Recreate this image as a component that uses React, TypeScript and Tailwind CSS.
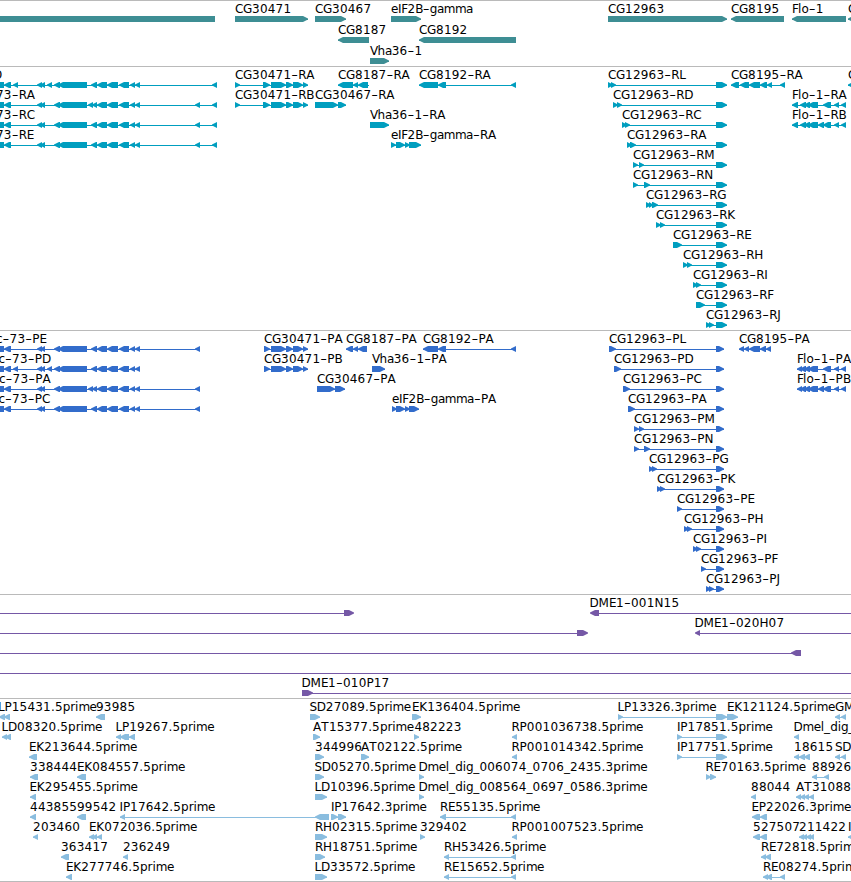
interface Feature {
    label?: string;
    // label start, when it differs from the first block
    x?: number;
    dir: "l" | "r";
    blocks: number[][];
    // connector range, when it runs past the blocks
    line?: [number, number];
}

interface TrackData {
    name: string;
    color: string;
    size: string;
    rowSize: string;
    rows: Feature[][];
}

const WIDTH = 851;
const HEAD = 5;

// Advance of each glyph in a label, px
const ADVANCE: Record<string, number> = {
    A: 8.3, B: 7.4, C: 8, D: 9, E: 7.2, F: 6.1, G: 9, H: 9, I: 3.3, J: 3.5, K: 8, L: 6.5,
    M: 10.3, N: 9, P: 7.2, R: 8, S: 7.2, T: 7.6, V: 7.6,
    a: 6.8, c: 6.6, d: 7.6, e: 7, g: 7.2, h: 7.3, i: 3.3, l: 3.3, m: 11.2, o: 7.4, p: 7.6, r: 4.8,
    "-": 7, "_": 6.1, ".": 3.9,
};

const left = (label: string, blocks: number[][], x?: number): Feature => ({ label, dir: "l", blocks, x });
const right = (label: string, blocks: number[][], x?: number): Feature => ({ label, dir: "r", blocks, x });

const geneRows: Feature[][] = [
    [
        { dir: "l", blocks: [[-20, 215]] },
        right("CG30471", [[235, 308]]),
        right("CG30467", [[315, 346]]),
        right("eIF2B-gamma", [[391, 421]]),
        right("CG12963", [[608, 727]]),
        left("CG8195", [[731, 784]]),
        left("Flo-1", [[792, 846]]),
        left("CG", [[848, 870]]),
    ],
    [left("CG8187", [[338, 369]]), left("CG8192", [[419, 516]])],
    [right("Vha36-1", [[370, 389]])],
];

const body = [[58, 87], [97, 107], [107, 118], [119, 129], [130, 135], [135, 140]];
const start73 = [[-20, 4], [4, 11], [37, 42], [40, 45], [54, 60]];
const start73D = [...start73, [13, 18], [47, 52]];
const cg30471 = [[263, 270], [271, 286], [286, 293], [293, 303], [303, 308]];
const flo = [[800, 806], [804, 810], [808, 818], [823, 831], [834, 839], [841, 846]];

const rnaEnd = [716, 727];
const rna = (suffix: string, ...blocks: number[][]) => right(`CG12963-R${suffix}`, [...blocks, rnaEnd]);

const transcriptRows: Feature[][] = [
    [
        left("RD", [...start73D, [91, 97], ...body, [212, 217]], -15),
        right("CG30471-RA", [[235, 240], ...cg30471]),
        { ...left("CG8187-RA", [[338, 353], [353, 358], [358, 368]]), line: [338, 369] },
        left("CG8192-RA", [[419, 438], [438, 446], [511, 516]]),
        rna("L", [608, 613], [611, 616]),
        left("CG8195-RA", [[731, 739], [740, 749], [749, 760], [760, 767], [767, 772], [780, 785]]),
        left("CG", [[848, 870]]),
    ],
    [
        left("73-RA", [...start73, [88, 93], [92, 97], ...body, [195, 200], [212, 217]], -4),
        right("CG30471-RB", [[235, 240], ...cg30471]),
        right("CG30467-RA", [[315, 338], [338, 346]]),
        rna("D", [613, 618], [617, 622]),
        left("Flo-1-RA", [[792, 798], ...flo]),
    ],
    [
        left("73-RC", [...start73, [91, 97], ...body, [195, 200], [212, 217]], -4),
        right("Vha36-1-RA", [[370, 389]]),
        rna("C", [622, 627], [625, 630]),
        left("Flo-1-RB", [[792, 798], ...flo, [818, 824]]),
    ],
    [
        left("73-RE", [...start73, [91, 97], ...body, [195, 200], [212, 217]], -4),
        right("eIF2B-gamma-RA", [[391, 396], [396, 405], [405, 410], [409, 421]]),
        rna("A", [627, 632], [630, 636]),
    ],
    [rna("M", [633, 638], [639, 644])],
    [rna("N", [633, 638], [644, 650])],
    [rna("G", [646, 651], [649, 653], [652, 658])],
    [rna("K", [656, 661], [660, 665])],
    [rna("E", [673, 682])],
    [rna("H", [683, 688], [687, 692])],
    [rna("I", [693, 698], [696, 701])],
    [rna("F", [696, 705])],
    [rna("J", [706, 711], [709, 714])],
];

const pep = (suffix: string, ...blocks: number[][]) => right(`CG12963-P${suffix}`, [...blocks, [716, 724]]);
const pep30471 = [[264, 270], ...cg30471.slice(1)];

const proteinRows: Feature[][] = [
    [
        left("c-73-PE", [...start73, [91, 97], ...body, [195, 200]], -4),
        right("CG30471-PA", pep30471),
        left("CG8187-PA", [[346, 353], [353, 358], [358, 367]]),
        left("CG8192-PA", [[423, 438], [438, 446], [511, 516]]),
        pep("L", [609, 616]),
        left("CG8195-PA", [[739, 744], [744, 749], [749, 760], [760, 766], [766, 771]]),
    ],
    [
        left("c-73-PD", [...start73D, [91, 97], ...body], -1.5),
        right("CG30471-PB", pep30471),
        right("Vha36-1-PA", [[372, 385]]),
        pep("D", [614, 621]),
        left("Flo-1-PA", [[797, 802], ...flo]),
    ],
    [
        left("c-73-PA", [...start73, [88, 93], [92, 97], ...body, [195, 200]], -1),
        right("CG30467-PA", [[317, 335], [335, 345]]),
        pep("C", [623, 630]),
        left("Flo-1-PB", [[797, 802], ...flo, [818, 824]]),
    ],
    [
        left("c-73-PC", [...start73, [91, 97], ...body, [195, 200]], -1.5),
        right("eIF2B-gamma-PA", [[392, 397], [396, 405], [405, 410], [409, 419]]),
        pep("A", [628, 635]),
    ],
    [pep("M", [634, 639], [639, 644])],
    [pep("N", [634, 639], [644, 650])],
    [pep("G", [649, 654], [652, 657])],
    [pep("K", [657, 662], [660, 665])],
    [pep("E", [677, 682])],
    [pep("H", [684, 689], [687, 692])],
    [pep("I", [693, 698], [696, 701])],
    [pep("F", [701, 706])],
    [pep("J", [706, 711], [709, 714])],
];

const cloneRows: Feature[][] = [
    [
        { dir: "r", blocks: [[344, 354]], line: [0, 350] },
        { ...left("DME1-001N15", [[590, 599]], 589.6), line: [595, WIDTH] },
    ],
    [
        { dir: "r", blocks: [[577, 588]], line: [0, 580] },
        { ...left("DME1-020H07", [[695, 700]], 694.6), line: [697, WIDTH] },
    ],
    [{ dir: "l", blocks: [[791, 801]], line: [0, 800] }],
    [{ dir: "r", blocks: [], line: [0, WIDTH] }],
    [{ ...right("DME1-010P17", [[302, 313]], 301.6), line: [305, WIDTH] }],
];

const estRows: Feature[][] = [
    [
        left("LP15431.5prime", [[-1, 5], [4, 10]], -2),
        left("93985", [[96, 105]]),
        right("SD27089.5prime", [[310, 320]], 309.6),
        right("EK136404.5prime", [[412, 421]]),
        right("LP13326.3prime", [[618, 623], [716, 727]], 617.6),
        right("EK121124.5prime", [[727, 738]]),
        left("GM", [[835, 840], [841, 846]]),
    ],
    [
        left("LD08320.5prime", [[2, 7], [5, 11]], 1.6),
        left("LP19267.5prime", [[116, 121], [120, 129], [129, 135]], 115.6),
        right("AT15377.5prime", [[313, 320]]),
        right("482223", [[414, 419]], 414.4),
        left("RP001036738.5prime", [[512, 517]], 511.6),
        right("IP17851.5prime", [[677, 682], [716, 727]]),
        left("Dmel_dig_", [[794, 799]], 793.6),
    ],
    [
        left("EK213644.5prime", [[29, 37]]),
        right("344996", [[315, 324]]),
        right("AT02122.5prime", [[361, 369]]),
        left("RP001014342.5prime", [[512, 517]], 511.6),
        right("IP17751.5prime", [[677, 682], [716, 727]]),
        left("18615", [[794, 799], [799, 805], [804, 810]]),
        left("SD", [[835, 840], [841, 846]]),
    ],
    [
        left("338444", [[30, 38]]),
        left("EK084557.5prime", [[77, 86]]),
        right("SD05270.5prime", [[315, 324]], 314.6),
        right("Dmel_dig_006074_0706_2435.3prime", [[419, 424]], 418.6),
        right("RE70163.5prime", [[706, 711], [710, 716]], 705.6),
        left("88926", [[812, 817], [824, 829]]),
    ],
    [
        left("EK295455.5prime", [[30, 36]], 29.6),
        right("LD10396.5prime", [[315, 327]], 314.6),
        right("Dmel_dig_008564_0697_0586.3prime", [[419, 424]], 418.6),
        left("88044", [[751, 756]]),
        left("AT31088", [[796, 801], [800, 805], [804, 809], [809, 814]]),
    ],
    [
        left("443855", [[30, 36]]),
        left("99542", [[77, 86]]),
        left("IP17642.5prime", [[120, 125], [315, 329]], 119.6),
        right("IP17642.3prime", [[331, 338], [338, 346]]),
        left("RE55135.5prime", [[440, 446], [511, 516]]),
        left("EP22026.3prime", [[752, 760], [760, 767]], 751.6),
    ],
    [
        left("203460", [[33, 38]]),
        left("EK072036.5prime", [[89, 94], [92, 97], [97, 102]]),
        right("RH02315.5prime", [[315, 327]]),
        right("329402", [[420, 425]]),
        left("RP001007523.5prime", [[512, 517]], 511.6),
        left("527507", [[753, 760], [760, 767]]),
        left("211422", [[799, 804], [802, 807], [806, 811], [809, 814]]),
        left("IP", [[848, 860]]),
    ],
    [
        left("363417", [[61, 69]]),
        left("236249", [[123, 128]]),
        right("RH18751.5prime", [[315, 325]]),
        left("RH53426.5prime", [[444, 449], [511, 516]]),
        left("RE72818.5prime", [[761, 766], [765, 771]]),
    ],
    [
        left("EK277746.5prime", [[66, 72]]),
        right("LD33572.5prime", [[315, 327]], 314.6),
        left("RE15652.5prime", [[444, 449], [511, 516]]),
        left("RE08274.5prime", [[763, 768], [766, 772], [780, 785]]),
    ],
];

const tracks: TrackData[] = [
    { name: "Genes", color: "#3e8e94", size: "h-[66px]", rowSize: "h-[21px]", rows: geneRows },
    { name: "Transcripts", color: "#009ebf", size: "h-[264px]", rowSize: "h-5", rows: transcriptRows },
    { name: "Proteins", color: "#326ccb", size: "h-[264px]", rowSize: "h-5", rows: proteinRows },
    { name: "Clones", color: "#7558a6", size: "h-[104px]", rowSize: "h-5", rows: cloneRows },
    { name: "ESTs", color: "#8abddf", size: "h-[183px]", rowSize: "h-5", rows: estRows },
];

// Splits a label at its hyphens, which are stretched wider than the font has them
function labelRuns(label: string, x: number) {
    let pos = x;
    return label.split(/(-)/).filter(Boolean).map(text => {
        const xs = text.split("").map(ch => {
            const at = pos;
            pos += ADVANCE[ch] ?? 7.85;
            return at.toFixed(1);
        });
        return { text, hyphen: text === "-", xs: xs.join(" ") };
    });
}

function blockPoints([a, b]: number[], dir: "l" | "r") {
    const head = Math.min(HEAD, b - a);
    return dir === "r"
        ? `${a},13 ${b - head},13 ${b},15.5 ${b},16.5 ${b - head},19 ${a},19`
        : `${b},13 ${a + head},13 ${a},15.5 ${a},16.5 ${a + head},19 ${b},19`;
}

function FeatureGlyph({ feature, color }: { feature: Feature; color: string }) {
    const { label, dir, blocks } = feature;
    const from = feature.line?.[0] ?? Math.min(...blocks.map(b => b[0]));
    const to = feature.line?.[1] ?? Math.max(...blocks.map(b => b[1]));
    const labelX = feature.x ?? from;

    return (
        <g>
            <rect x={from} y={16} width={to - from} height={1} fill={color} />
            {blocks.map((block, i) => (
                <polygon key={i} points={blockPoints(block, dir)} fill={color} />
            ))}
            {label && (
                <text y={10} fill="#000">
                    {labelRuns(label, labelX).map((run, i) => run.hyphen ? (
                        <tspan key={i} x={run.xs} textLength={6.8} lengthAdjust="spacingAndGlyphs">-</tspan>
                    ) : (
                        <tspan key={i} x={run.xs}>{run.text}</tspan>
                    ))}
                </text>
            )}
        </g>
    );
}

function Track({ track }: { track: TrackData }) {
    return (
        <section aria-label={track.name} className={`${track.size} shrink-0 border-t border-[#bababa] pt-0.5`}>
            {track.rows.map((row, i) => (
                <div key={i} className={track.rowSize}>
                    <svg width={WIDTH} height={20} className="block text-[12px]">
                        {row.map((feature, j) => (
                            <FeatureGlyph key={j} feature={feature} color={track.color} />
                        ))}
                    </svg>
                </div>
            ))}
        </section>
    );
}

export default function App() {
    return (
        <main className="flex h-[882px] w-[851px] flex-col overflow-hidden border-b border-[#bababa] bg-white font-['DejaVu_Sans',sans-serif]">
            {tracks.map(track => (
                <Track key={track.name} track={track} />
            ))}
        </main>
    );
}
